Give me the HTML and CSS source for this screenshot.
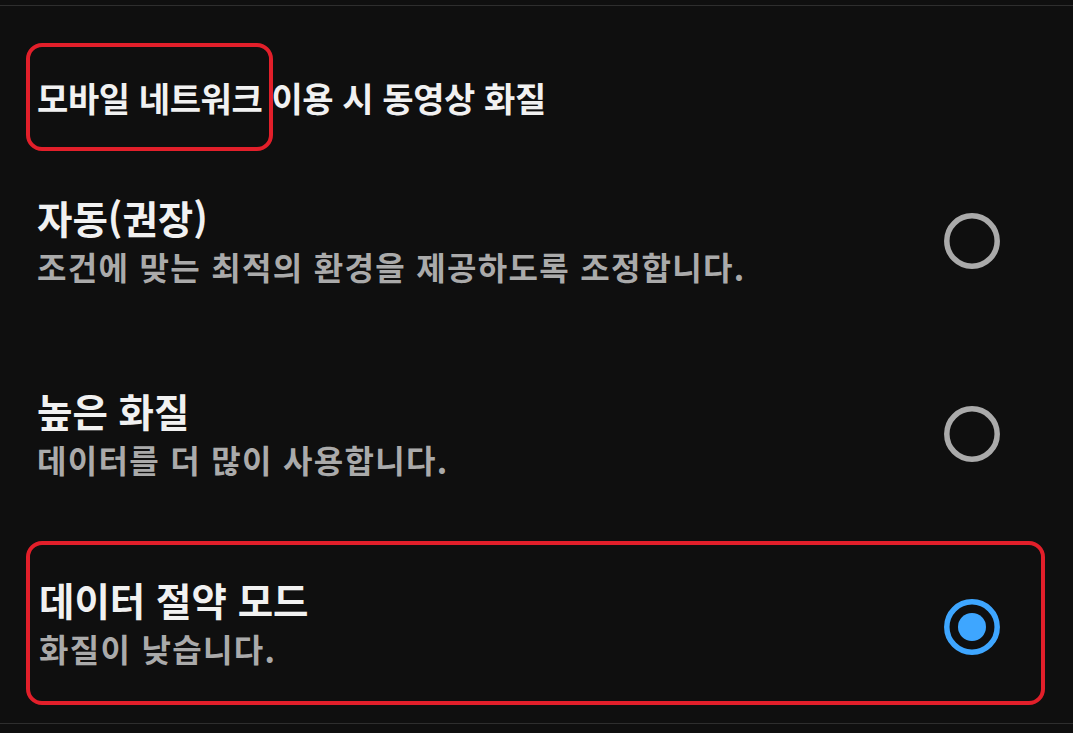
FILE: index.html
```html
<!DOCTYPE html>
<html lang="ko">
<head>
  <meta charset="UTF-8">
  <title>동영상 화질 설정</title>
  <link rel="stylesheet" href="styles.css">
</head>
<body>

  <div class="rule rule-top"></div>

  <div class="section-head">
    <div class="mark mark-head"></div>
    <h2 class="heading">모바일 네트워크 이용 시 동영상 화질</h2>
  </div>

  <div class="options">
    <div class="option">
      <div class="option-text">
        <div class="option-title">자동(권장)</div>
        <div class="option-desc">조건에 맞는 최적의 환경을 제공하도록 조정합니다.</div>
      </div>
      <svg class="radio" width="56" height="56" viewBox="0 0 56 56">
        <circle cx="28" cy="28" r="25.2" fill="none" stroke="#aaaaaa" stroke-width="5.5"/>
      </svg>
    </div>

    <div class="option">
      <div class="option-text">
        <div class="option-title">높은 화질</div>
        <div class="option-desc">데이터를 더 많이 사용합니다.</div>
      </div>
      <svg class="radio" width="56" height="56" viewBox="0 0 56 56">
        <circle cx="28" cy="28" r="25.2" fill="none" stroke="#aaaaaa" stroke-width="5.5"/>
      </svg>
    </div>

    <div class="option selected">
      <div class="mark mark-row"></div>
      <div class="option-text">
        <div class="option-title">데이터 절약 모드</div>
        <div class="option-desc">화질이 낮습니다.</div>
      </div>
      <svg class="radio" width="56" height="56" viewBox="0 0 56 56">
        <circle cx="28" cy="28" r="25.2" fill="none" stroke="#3ea6ff" stroke-width="5.5"/>
        <circle cx="28" cy="28" r="14" fill="#3ea6ff"/>
      </svg>
    </div>
  </div>

  <div class="rule"></div>

</body>
</html>
```

FILE: styles.css
```css
body { margin: 0; background: #0f0f0f; font-family: "Noto Sans CJK KR", "Noto Sans", sans-serif; color: #f1f1f1; height: 733px; overflow: hidden; }
.rule { height: 1px; background: #2e2e2e; }
.rule-top { margin-top: 5px; }

.section-head { position: relative; height: 138px; padding-left: 37px; display: flex; align-items: center; padding-top: 46px; box-sizing: border-box; }
.heading { margin: 0; font-size: 34px; font-weight: 700; letter-spacing: -0.4px; line-height: 42px; }

.mark { position: absolute; border: 4px solid #e21f2a; border-radius: 16px; box-sizing: border-box; pointer-events: none; }
.mark-head { left: 26px; top: 37px; width: 247px; height: 108px; }
.mark-row { left: 26px; top: 11px; right: 28px; bottom: 18px; }

.option { position: relative; height: 193px; display: flex; align-items: center; padding: 0 73px 0 37px; box-sizing: border-box; }
.option.selected .option-text { padding-left: 2px; padding-bottom: 8px; }
.option-text { flex: 1; }
.option-title { font-size: 38.5px; font-weight: 700; line-height: 46px; }
.option-desc { font-size: 32px; font-weight: 700; color: #aaaaaa; letter-spacing: 1.3px; line-height: 44px; margin-top: 4px; }
.radio { flex: none; display: block; }
```
